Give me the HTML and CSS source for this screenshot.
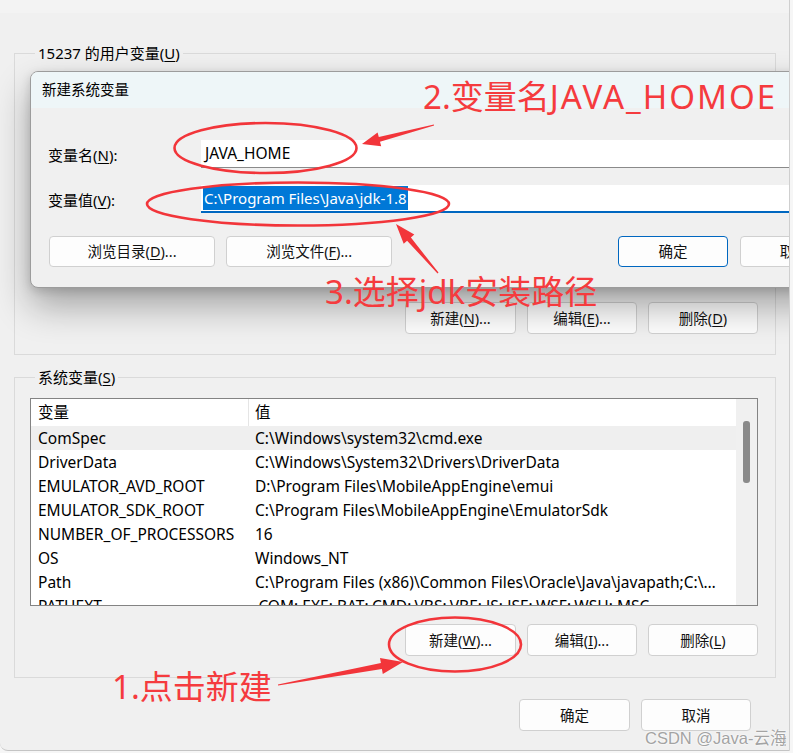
FILE: index.html
```html
<!DOCTYPE html>
<html lang="zh-CN">
<head>
<meta charset="utf-8">
<title>环境变量</title>
<link rel="stylesheet" href="styles.css">
</head>
<body>
<div class="window">
  <div class="topstrip"></div>
  <fieldset class="group g1">
    <legend>15237 的用户变量(<u>U</u>)</legend>
    <div class="btnrow g1-btns">
      <button class="btn">新建(<u>N</u>)...</button>
      <button class="btn">编辑(<u>E</u>)...</button>
      <button class="btn">删除(<u>D</u>)</button>
    </div>
  </fieldset>
  <fieldset class="group g2">
    <legend>系统变量(<u>S</u>)</legend>
    <div class="table">
      <div class="tmain">
        <div class="thead"><div class="c1">变量</div><div class="c2">值</div></div>
        <div class="row hover"><div class="c1">ComSpec</div><div class="c2">C:\Windows\system32\cmd.exe</div></div>
        <div class="row"><div class="c1">DriverData</div><div class="c2">C:\Windows\System32\Drivers\DriverData</div></div>
        <div class="row"><div class="c1">EMULATOR_AVD_ROOT</div><div class="c2">D:\Program Files\MobileAppEngine\emui</div></div>
        <div class="row"><div class="c1">EMULATOR_SDK_ROOT</div><div class="c2">C:\Program Files\MobileAppEngine\EmulatorSdk</div></div>
        <div class="row"><div class="c1">NUMBER_OF_PROCESSORS</div><div class="c2">16</div></div>
        <div class="row"><div class="c1">OS</div><div class="c2">Windows_NT</div></div>
        <div class="row"><div class="c1">Path</div><div class="c2">C:\Program Files (x86)\Common Files\Oracle\Java\javapath;C:\Windows\system32</div></div>
        <div class="row"><div class="c1">PATHEXT</div><div class="c2">.COM;.EXE;.BAT;.CMD;.VBS;.VBE;.JS;.JSE;.WSF;.WSH;.MSC</div></div>
      </div>
      <div class="scroll"><div class="thumb"></div></div>
    </div>
    <div class="btnrow g2-btns">
      <button class="btn">新建(<u>W</u>)...</button>
      <button class="btn">编辑(<u>I</u>)...</button>
      <button class="btn">删除(<u>L</u>)</button>
    </div>
  </fieldset>
  <div class="btnrow bottom-btns">
    <button class="btn">确定</button>
    <button class="btn">取消</button>
  </div>

  <div class="dialog">
    <div class="dtitle">新建系统变量</div>
    <div class="dbody">
      <div class="field">
        <label class="flabel">变量名(<u>N</u>):</label>
        <div class="input">JAVA_HOME</div>
      </div>
      <div class="field f2">
        <label class="flabel">变量值(<u>V</u>):</label>
        <div class="input focused"><span class="selected">C:\Program Files\Java\jdk-1.8</span></div>
      </div>
      <div class="dbtns">
        <button class="btn wide">浏览目录(<u>D</u>)...</button>
        <button class="btn wide">浏览文件(<u>F</u>)...</button>
        <button class="btn default ok">确定</button>
        <button class="btn">取消</button>
      </div>
    </div>
  </div>

  <svg class="grip" width="14" height="14" viewBox="0 0 14 14">
    <rect x="10" y="2" width="2" height="2"/>
    <rect x="6" y="6" width="2" height="2"/><rect x="10" y="6" width="2" height="2"/>
    <rect x="2" y="10" width="2" height="2"/><rect x="6" y="10" width="2" height="2"/><rect x="10" y="10" width="2" height="2"/>
  </svg>
</div>

<svg class="marks" width="793" height="753" viewBox="0 0 793 753">
  <ellipse cx="265.5" cy="148" rx="91" ry="25"/>
  <ellipse cx="298" cy="204" rx="151" ry="21.5"/>
  <ellipse cx="455" cy="644.5" rx="66" ry="27"/>
  <polygon points="434.1,125.5 380.0,141.8 381.2,146.2 362,144 377.6,132.6 378.8,137.0 433.9,124.5"/>
  <polygon points="438.5,272.6 410.9,237.6 414.3,234.6 396,224 403.7,243.8 407.1,240.8 437.5,273.4"/>
  <polygon points="278.1,685.6 381.9,669.0 382.8,673.9 403,662 380.0,658.1 380.9,663.0 277.9,684.4"/>
</svg>
<div class="note n2">2.变量名<span class="caps">JAVA_HOMOE</span></div>
<div class="note n3">3.选择jdk安装路径</div>
<div class="note n1">1.点击新建</div>
<div class="watermark">CSDN @Java-云海</div>
</body>
</html>
```

FILE: styles.css
```css
* { box-sizing: border-box; }

body {
  margin: 0;
  width: 793px;
  height: 753px;
  overflow: hidden;
  position: relative;
  background: #f6f6f6;
  font-family: "Noto Sans", "Noto Sans CJK SC", sans-serif;
  font-size: 15px;
  color: #000;
}

u { text-decoration: underline; text-underline-offset: 2px; }

.window {
  position: relative;
  width: 790px;
  height: 751px;
  background: #f0f0f0;
  border-right: 1px solid #cfcfcf;
  border-bottom: 1px solid #c4c4c4;
  border-bottom-left-radius: 8px;
  overflow: hidden;
}

.topstrip { height: 13px; background: #f3f3f3; }

.group {
  margin: 0 13px 0 14px;
  padding: 0;
  border: 1px solid #dadada;
  min-width: 0;
}
.group legend {
  margin-left: 5px;
  padding: 0 3px;
  line-height: 20px;
  height: 20px;
}

.g1 { margin-top: 30px; padding: 0 17px 20px 15px; }
.g1-btns { margin-top: 239px; }

.g2 { margin-top: 12px; padding: 0 17px 21px 15px; }

.btnrow { display: flex; justify-content: flex-end; gap: 11px; }
.g2-btns { margin-top: 18px; }
.bottom-btns { margin-top: 21px; margin-right: 38px; }

.btn {
  width: 111px;
  height: 32px;
  padding: 0;
  background: #fdfdfd;
  border: 1px solid #d0d0d0;
  border-radius: 4px;
  font-family: inherit;
  font-size: 14.5px;
  color: #111;
  line-height: 30px;
}
.btnrow .btn { width: 110px; }
.btnrow .btn:first-child { width: 111px; }

/* table */
.table {
  margin-top: 11px;
  height: 208px;
  border: 1px solid #838383;
  background: #fff;
  display: grid;
  grid-template-columns: 1fr 21px;
  overflow: hidden;
  font-size: 15.5px;
}
.tmain { overflow: hidden; }
.thead, .row {
  display: grid;
  grid-template-columns: 218px 1fr;
  white-space: nowrap;
}
.thead { height: 27px; line-height: 27px; }
.thead .c1 { border-right: 1px solid #e5e5e5; }
.row { height: 24px; line-height: 24px; }
.row.hover { background: #efefef; }
.c1 { padding-left: 7px; overflow: hidden; }
.c2 { padding-left: 6px; overflow: hidden; text-overflow: ellipsis; padding-right: 6px; }
.scroll { background: #f0f0f0; position: relative; }
.thumb {
  position: absolute;
  left: 7px;
  top: 22px;
  width: 7px;
  height: 62px;
  background: #8a8a8a;
  border-radius: 3px;
}

/* dialog */
.dialog {
  position: absolute;
  left: 30px;
  top: 71px;
  width: 820px;
  height: 217px;
  background: #f0f0f0;
  border: 1px solid #9c9c9c;
  border-radius: 8px;
  box-shadow: 0 18px 36px rgba(0, 0, 0, 0.32), 0 3px 10px rgba(0, 0, 0, 0.14);
  overflow: hidden;
}
.dtitle {
  height: 36px;
  line-height: 35px;
  background: #eef6f8;
  padding-left: 11px;
  font-size: 14.5px;
}
.dbody { padding: 32px 0 0 17px; }
.field { display: flex; align-items: center; height: 28px; }
.f2 { margin-top: 17px; }
.flabel { width: 153px; flex: none; }
.input {
  flex: 1;
  height: 28px;
  line-height: 27px;
  background: #fff;
  border-bottom: 1px solid #8a8a8a;
  padding-left: 4px;
  white-space: nowrap;
  font-size: 15.5px;
}
.input.focused { border-bottom: 2px solid #0067c0; line-height: 26px; padding-left: 2px; font-size: 15px; }
.selected { background: #0078d7; color: #fff; padding: 2px 1px; }
.dbtns { display: flex; gap: 11px; margin-top: 23px; padding-left: 1px; }
.dbtns .btn { height: 31px; line-height: 29px; width: 110px; }
.dbtns .btn.wide { width: 167px; }
.dbtns .ok { margin-left: 215px; margin-right: 1px; }
.btn.default { border-color: #0067c0; }

.grip {
  position: absolute;
  right: 1px;
  bottom: 2px;
  fill: #bdbdbd;
}

/* annotations */
.marks {
  position: absolute;
  left: 0;
  top: 0;
  pointer-events: none;
}
.marks ellipse { fill: none; stroke: #f2353a; stroke-width: 2.6; }
.marks polygon { fill: #f2353a; }

.note {
  position: absolute;
  color: #f53b3e;
  font-family: "Noto Sans", "Noto Sans CJK SC", sans-serif;
  font-size: 33px;
  line-height: 40px;
  white-space: nowrap;
}
.n2 .caps { letter-spacing: 2px; }
.n2 { left: 423px; top: 77px; }
.n3 { left: 325px; top: 272px; }
.n1 { left: 112px; top: 667px; }

.watermark {
  position: absolute;
  left: 645px;
  top: 725px;
  font-family: "Liberation Sans", "Noto Sans CJK SC", sans-serif;
  font-size: 16.5px;
  color: #a3a3a3;
  text-shadow: 0 0 2px #fff, 0 0 2px #fff;
  white-space: nowrap;
}
```
